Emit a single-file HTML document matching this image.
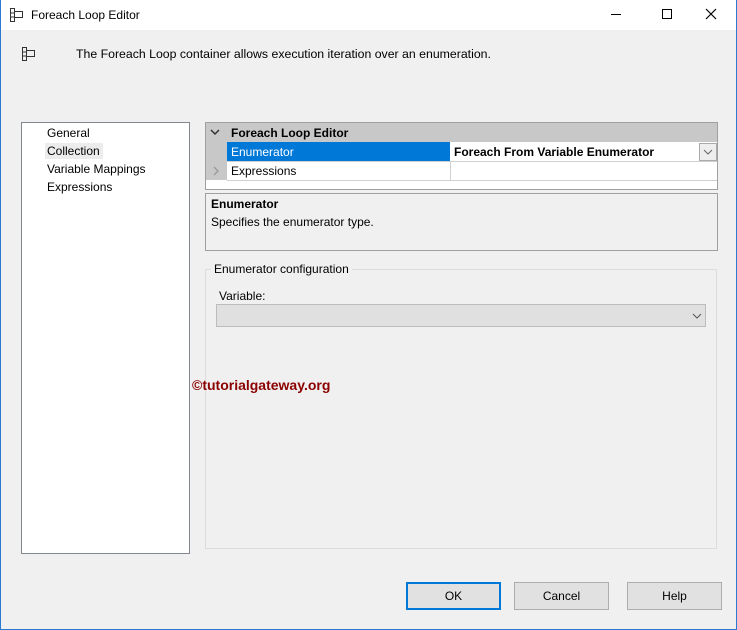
<!DOCTYPE html>
<html><head><style>
*{margin:0;padding:0;box-sizing:border-box}
body{width:737px;height:630px;background:#f0f0f0;font-family:"Liberation Sans",sans-serif;font-size:12px;color:#000;position:relative;overflow:hidden}
.a{position:absolute}
.btn{position:absolute;top:582px;width:95px;height:28px;background:#e1e1e1;border:1px solid #adadad;text-align:center;line-height:26px;font-size:12px}
</style></head><body>
<div class="a" style="left:0;top:0;width:737px;height:630px;border:1px solid #2b79d0;border-top:none"></div>
<div class="a" style="left:1px;top:0;width:735px;height:30px;background:#fff"></div>
<svg class="a" style="left:9px;top:7px" width="16" height="16"><path d="M1.5 1.5h4v13h-4zM5.5 4.5h8v6h-8M1.5 6h4M1.5 10h4" fill="none" stroke="#333" stroke-width="1"/></svg>
<div class="a" style="left:31px;top:8px;font-size:12px">Foreach Loop Editor</div>
<div class="a" style="left:611px;top:14px;width:10px;height:1px;background:#000"></div>
<div class="a" style="left:662px;top:9px;width:10px;height:10px;border:1px solid #000"></div>
<svg class="a" style="left:705px;top:8px" width="12" height="12"><path d="M1 1L11 11M11 1L1 11" stroke="#000" stroke-width="1.2"/></svg>
<svg class="a" style="left:21px;top:46px" width="16" height="16"><path d="M1.5 1.5h4v13h-4zM5.5 4.5h8v6h-8M1.5 6h4M1.5 10h4" fill="none" stroke="#333"/></svg>
<div class="a" style="left:76px;top:47px;font-size:12.3px">The Foreach Loop container allows execution iteration over an enumeration.</div>
<div class="a" style="left:21px;top:122px;width:169px;height:432px;background:#fff;border:1px solid #828790"></div>
<div class="a" style="left:47px;top:126px">General</div>
<div class="a" style="left:45px;top:143px;width:58px;height:16px;background:#ececec"></div>
<div class="a" style="left:47px;top:144px">Collection</div>
<div class="a" style="left:47px;top:162px">Variable Mappings</div>
<div class="a" style="left:47px;top:180px">Expressions</div>
<div class="a" style="left:205px;top:122px;width:513px;height:68px;background:#fff;border:1px solid #a0a0a0"></div>
<div class="a" style="left:206px;top:123px;width:511px;height:19px;background:#c8c8c8"></div>
<div class="a" style="left:206px;top:142px;width:21px;height:38px;background:#c8c8c8"></div>
<svg class="a" style="left:210px;top:128px" width="10" height="8"><path d="M1 2l4 4 4-4" fill="none" stroke="#333" stroke-width="1.5"/></svg>
<div class="a" style="left:231px;top:126px;font-weight:bold">Foreach Loop Editor</div>
<div class="a" style="left:227px;top:142px;width:223px;height:19px;background:#0078d7;color:#fff;padding:3px 4px">Enumerator</div>
<div class="a" style="left:454px;top:145px;font-weight:bold">Foreach From Variable Enumerator</div>
<div class="a" style="left:699px;top:143px;width:18px;height:18px;background:#eee;border:1px solid #aaa"></div>
<svg class="a" style="left:703px;top:148px" width="10" height="8"><path d="M1 2l4 4 4-4" fill="none" stroke="#666"/></svg>
<div class="a" style="left:227px;top:161px;width:490px;height:1px;background:#d0d0d0"></div>
<div class="a" style="left:450px;top:161px;width:1px;height:19px;background:#d0d0d0"></div>
<div class="a" style="left:227px;top:180px;width:490px;height:1px;background:#d0d0d0"></div>
<svg class="a" style="left:212px;top:166px" width="8" height="10"><path d="M2 1l4 4-4 4" fill="none" stroke="#999" stroke-width="1.3"/></svg>
<div class="a" style="left:231px;top:164px">Expressions</div>
<div class="a" style="left:205px;top:193px;width:513px;height:58px;border:1px solid #a0a0a0"></div>
<div class="a" style="left:211px;top:197px;font-weight:bold">Enumerator</div>
<div class="a" style="left:211px;top:215px">Specifies the enumerator type.</div>
<div class="a" style="left:205px;top:269px;width:512px;height:280px;border:1px solid #dcdcdc"></div>
<div class="a" style="left:211px;top:262px;background:#f0f0f0;padding:0 3px">Enumerator configuration</div>
<div class="a" style="left:219px;top:289px">Variable:</div>
<div class="a" style="left:216px;top:304px;width:490px;height:23px;background:#e0e0e0;border:1px solid #bcbcbc"></div>
<svg class="a" style="left:692px;top:312px" width="10" height="8"><path d="M1 2l4 4 4-4" fill="none" stroke="#555"/></svg>
<div class="a" style="left:192px;top:377px;color:#8b0000;font-weight:bold;font-size:14px">©tutorialgateway.org</div>
<div class="btn" style="left:406px;border:2px solid #0078d7;line-height:24px">OK</div>
<div class="btn" style="left:514px">Cancel</div>
<div class="btn" style="left:627px">Help</div>
</body></html>
